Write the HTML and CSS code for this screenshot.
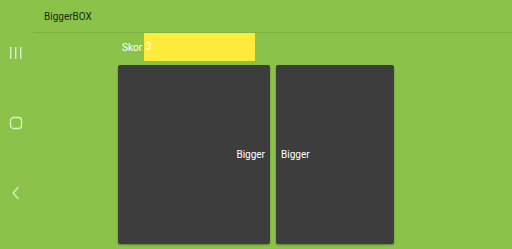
FILE: index.html
```html
<!DOCTYPE html>
<html lang="id">
<head>
    <meta charset="UTF-8">
    <meta name="viewport" content="width=device-width, initial-scale=1.0">
    <title>BiggerBOX</title>
    <link rel="stylesheet" href="styles.css">
</head>
<body>

<div class="navbar">
    <!-- tombol recent -->
    <svg class="nav-icon" width="14" height="14" viewBox="0 0 14 14">
        <rect x="1" y="1" width="1.4" height="12" fill="#dcefcb"/>
        <rect x="6" y="1" width="1.4" height="12" fill="#dcefcb"/>
        <rect x="11" y="1" width="1.4" height="12" fill="#dcefcb"/>
    </svg>
    <!-- tombol home -->
    <svg class="nav-icon" width="14" height="14" viewBox="0 0 14 14">
        <rect x="1.5" y="1.5" width="11" height="11" rx="3" fill="none" stroke="#dcefcb" stroke-width="1.3"/>
    </svg>
    <!-- tombol back -->
    <svg class="nav-icon" width="14" height="14" viewBox="0 0 14 14">
        <polyline points="9.5,1 4,7 9.5,13" fill="none" stroke="#dcefcb" stroke-width="1.3"/>
    </svg>
</div>

<div class="main">
    <div class="header">BiggerBOX</div>

    <div class="content">
        <div class="skor">
            <span class="skor-label">Skor</span>
            <div class="skor-box">3</div>
        </div>

        <div class="box-list">
            <div class="box box-kiri">Bigger</div>
            <div class="box box-kanan">Bigger</div>
        </div>
    </div>
</div>

</body>
</html>
```

FILE: styles.css
```css
html, body {
    height: 100%;
}
body {
    margin: 0;
    background-color: #8bc34a;
    font-family: Roboto, "Noto Sans", sans-serif;
    font-size: 10px;
    display: flex;
    overflow: hidden;
}
.navbar {
    width: 33px;
    flex-shrink: 0;
    display: flex;
    flex-direction: column;
    align-items: center;
    padding-top: 46px;
    gap: 56px;
}
.nav-icon {
    display: block;
    margin-left: -1px;
}
.main {
    flex: 1;
    display: flex;
    flex-direction: column;
}
.header {
    height: 32px;
    line-height: 34px;
    padding-left: 11px;
    color: #1c2a10;
    border-bottom: 1px solid #7eb23f;
}
.content {
    padding-left: 85px;
}
.skor {
    display: flex;
    align-items: center;
    margin-left: 4px;
}
.skor-label {
    color: #fff;
    margin-right: 2px;
}
.skor-box {
    width: 109px;
    height: 28px;
    line-height: 28px;
    padding-left: 2px;
    background-color: #ffeb3b;
    color: #fff;
}
.box-list {
    display: flex;
    gap: 6px;
    margin-top: 4px;
}
.box {
    height: 179px;
    background-color: #3d3d3d;
    color: #fff;
    border-radius: 2px;
    box-shadow: 0 1px 2px rgba(0, 0, 0, 0.35);
    display: flex;
    align-items: center;
}
.box-kiri {
    width: 152px;
    justify-content: flex-end;
    padding-right: 5px;
    box-sizing: border-box;
}
.box-kanan {
    width: 118px;
    padding-left: 5px;
    box-sizing: border-box;
}
```
